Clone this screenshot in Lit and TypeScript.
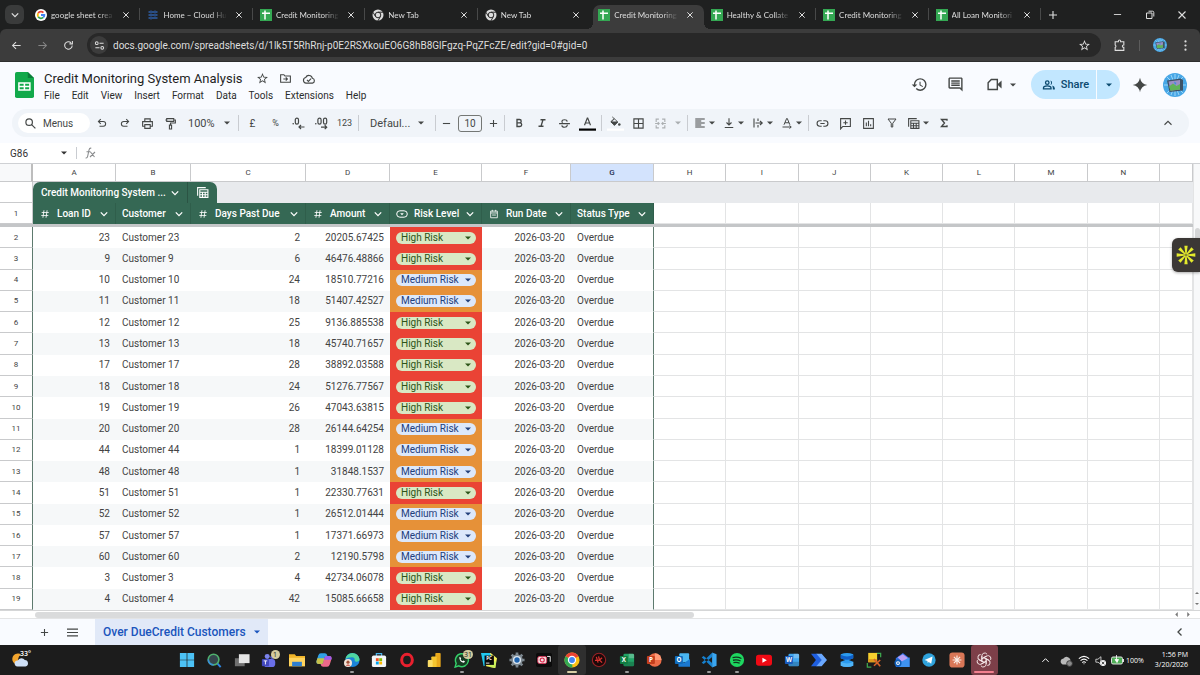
import { LitElement, html, css, svg } from "lit";
import { customElement } from "lit/decorators.js";
import { classMap } from "lit/directives/class-map.js";

/* ---------- shared ---------- */

const base = css`
  * { box-sizing: border-box; }
  button, input, select {
    margin: 0; padding: 0; border: 0; background: none; color: inherit;
    font: inherit; outline: 0; appearance: none; border-radius: 0;
  }
  button { display: flex; align-items: center; justify-content: center; flex: none; }
  a { color: inherit; text-decoration: none; }
  svg { display: block; flex: none; }
`;

const icon = (body: unknown, size = 12, box = 24) => html`<svg width=${size} height=${size}
  viewBox="0 0 ${box} ${box}" fill="currentColor" aria-hidden="true">${body}</svg>`;
const line = (d: string, width = 2) => svg`<path d=${d} fill="none" stroke="currentColor" stroke-width=${width}/>`;
const fill = (d: string) => svg`<path d=${d}/>`;
const caret = html`<svg width="6" height="4" viewBox="0 0 6 4" fill="currentColor" aria-hidden="true"><path d="M0 .5h6L3 3.5z"/></svg>`;
const chevron = html`<svg width="8" height="8" viewBox="0 0 8 8" fill="none" stroke="currentColor" stroke-width="1.3" aria-hidden="true"><path d="M.8 2.4 4 5.6l3.2-3.2"/></svg>`;

const STAR = fill("M22 9.24l-7.19-.62L12 2 9.19 8.63 2 9.24l5.46 4.73L5.82 21 12 17.27 18.18 21l-1.63-7.03L22 9.24zM12 15.4l-3.76 2.27 1-4.28-3.32-2.88 4.38-.38L12 6.1l1.71 4.04 4.38.38-3.32 2.88 1 4.28L12 15.4z");

const avatar = (size: number) => html`<svg width=${size} height=${size} viewBox="0 0 24 24" aria-hidden="true">
  <circle cx="12" cy="12" r="12" fill="#48a7e6"/>
  <path d="M12 1v22M1 12h22M4 4l16 16M20 4L4 20M8 2l8 20M16 2L8 22" stroke="#9cd6f7" stroke-width="1"/>
  <path d="M4 7.500 17.500 5.500 20 7v10.500L6.500 19z" fill="#3d5266"/>
  <path d="M5.500 8.600 17 7v9.500L7.500 17.700z" fill="#9a8fc4"/>
  <path d="M6 13.500 10 10.500l3.500 2.500L17 11v5.500L7.500 17.700z" fill="#5fb357"/>
  <path d="M11 8.500l2.500 1.500-1.500 2z" fill="#3c8be0"/>
</svg>`;

/* ---------- browser window ---------- */

const favicons: Record<string, unknown> = {
  google: html`<svg width="12" height="12" viewBox="0 0 24 24"><circle cx="12" cy="12" r="12" fill="#fff"/><g fill="none" stroke-width="3.600"><path d="M6.400 8.400A6.700 6.700 0 0 1 16.800 7.300" stroke="#ea4335"/><path d="M6.400 15.600a6.700 6.700 0 0 1 0-7.200" stroke="#fbbc05"/><path d="M16.600 16.900A6.700 6.700 0 0 1 6.400 15.600" stroke="#34a853"/><path d="M12 12h6.700a6.700 6.700 0 0 1-2.100 4.900" stroke="#4285f4"/></g></svg>`,
  cloud: html`<svg width="12" height="12" viewBox="0 0 12 12" fill="none" stroke="#2f5fa8" stroke-width="1.500"><path d="M1.500 3h9M1.500 6h9M1.500 9h9"/><path d="M4 1.500v3M8 4.500v3M4 7.500v3M8 1.500v2" stroke="#284b80" stroke-width="1.800"/></svg>`,
  sheets: html`<svg width="12" height="12" viewBox="0 0 12 12"><path d="M0 0h12v12H0z" fill="#34a853"/><path d="M2 4.200h8M5 1.500v9" stroke="#fff" stroke-width="1.500"/></svg>`,
  chrome: html`<svg width="12" height="12" viewBox="0 0 24 24"><circle cx="12" cy="12" r="11" fill="#dcdcdc"/><circle cx="12" cy="12" r="5.600" fill="#dcdcdc" stroke="#2a2a2a" stroke-width="2"/><path d="M12 6.400h10M7 15 2 6.500M16.800 15 12 23.500" stroke="#2a2a2a" stroke-width="2"/></svg>`,
};

const TABS = [
  { icon: "google", title: "google sheet crea" },
  { icon: "cloud", title: "Home – Cloud Hu" },
  { icon: "sheets", title: "Credit Monitoring" },
  { icon: "chrome", title: "New Tab" },
  { icon: "chrome", title: "New Tab" },
  { icon: "sheets", title: "Credit Monitoring", active: true },
  { icon: "sheets", title: "Healthy & Collate" },
  { icon: "sheets", title: "Credit Monitoring" },
  { icon: "sheets", title: "All Loan Monitori" },
];

@customElement("browser-bar")
class BrowserBar extends LitElement {
  static styles = [base, css`
    :host { display: block; background: #1f2020; color: #dedede; font-family: Lato, "Open Sans", sans-serif; }
    .strip { display: flex; height: 29px; padding-top: 5px; }
    .search { width: 19px; height: 19px; margin: 0 4px 0 5px; border-radius: 6px; background: #3a3b3b; }
    .tabs { flex: 1; display: flex; min-width: 0; }
    .tab { position: relative; flex: 1 1 0; min-width: 0; display: flex; align-items: center; padding: 0 10px 5px 7px; font-size: 8px; }
    .title { flex: 1; min-width: 0; margin: 0 8px 0 4px; white-space: nowrap; overflow: hidden; line-height: 16px;
      mask-image: linear-gradient(90deg, #000 75%, transparent); }
    .line { background: linear-gradient(#484949, #484949) right 3px / 1px 12px no-repeat; }
    .active { margin-left: 3px; padding-left: 5px; background: #3c3c3c; border-radius: 7px 7px 0 0; }
    .active::before, .active::after { content: ""; position: absolute; bottom: 0; width: 6px; height: 6px; }
    .active::before { left: -6px; background: radial-gradient(circle at 0 0, transparent 6px, #3c3c3c 6px); }
    .active::after { right: -6px; background: radial-gradient(circle at 100% 0, transparent 6px, #3c3c3c 6px); }
    .window { width: 159px; display: flex; align-items: center; justify-content: space-between; padding: 0 12px 5px 6px; }
    .window button { width: 12px; height: 12px; }
    .window button:first-child { margin-right: 32px; }
    .bar { display: flex; align-items: center; height: 33px; background: #3c3c3c; border-bottom: 1px solid #2e2e2e;
      border-radius: 6px 6px 0 0; padding: 0 10px 0 3px; }
    .nav { width: 26px; height: 24px; }
    .dim { color: #858585; }
    .omnibox { flex: 1; display: flex; align-items: center; height: 24px; margin: 0 12px 0 6px; padding: 0 10px 0 3px;
      border-radius: 12px; background: #282828; }
    .site { width: 18px; height: 18px; border-radius: 9px; background: #3c3c3c; margin-right: 5px; }
    .url { flex: 1; min-width: 0; height: 20px; font-family: Roboto, sans-serif; font-size: 10px; }
    .tools { display: flex; align-items: center; gap: 13px; }
    .rule { width: 1px; height: 11px; background: #5c5c5c; }
    .more { width: 10px; }
  `];
  render() {
    return html`
      <div class="strip">
        <button class="search" aria-label="Search tabs">${chevron}</button>
        <div class="tabs" role="tablist">
          ${TABS.map((t, i) => html`<div role="tab" aria-selected=${t.active ? "true" : "false"}
            class=${classMap({ tab: true, active: !!t.active, line: !t.active && !TABS[i + 1]?.active })}>
            ${favicons[t.icon]}<span class="title">${t.title}</span>
            <button aria-label="Close tab">${icon(line("M2 2l8 8M10 2l-8 8", 1.5), 8, 12)}</button>
          </div>`)}
        </div>
        <div class="window">
          <button aria-label="New tab">${icon(line("M5 0v10M0 5h10", 1.4), 8, 10)}</button>
          <button aria-label="Minimise">${icon(line("M1 5h8", 1), 9, 10)}</button>
          <button aria-label="Restore">${icon(line("M1.500 3h5.500v5.500H1.500zM3.500 1.200h4q1.300 0 1.300 1.300v4", 1), 10, 10)}</button>
          <button aria-label="Close">${icon(line("M1.500 1.500l7 7M8.500 1.500l-7 7", 1.1), 10, 10)}</button>
        </div>
      </div>
      <div class="bar">
        <button class="nav" aria-label="Back">${icon(line("M21 12H4M11 4.500 3.500 12l7.500 7.500", 2.3), 11)}</button>
        <button class="nav dim" aria-label="Forward">${icon(line("M3 12h17M13 4.500l7.500 7.500-7.500 7.500", 2.3), 11)}</button>
        <button class="nav" aria-label="Reload">${icon(line("M20 12a8.200 8.200 0 1 1-2.500-6M20.500 2v6.500H14", 2.3), 11)}</button>
        <div class="omnibox">
          <button class="site" aria-label="View site information">${icon(svg`<circle cx="6" cy="7" r="3" fill="none" stroke="currentColor" stroke-width="2.200"/><circle cx="18" cy="17" r="3" fill="none" stroke="currentColor" stroke-width="2.200"/><path d="M12 7h9M3 17h9" stroke="currentColor" stroke-width="2.200"/>`, 11)}</button>
          <input class="url" type="text" aria-label="Address bar" .value=${"docs.google.com/spreadsheets/d/1lk5T5RhRnj-p0E2RSXkouEO6G8hB8GlFgzq-PqZFcZE/edit?gid=0#gid=0"}>
          <button aria-label="Bookmark this tab">${icon(STAR, 13)}</button>
        </div>
        <div class="tools">
          <button aria-label="Extensions">${icon(line("M4 5h6V3.800a2 2 0 0 1 4 0V5h6v6h-.5a2.200 2.200 0 0 0 0 4.500h.5V21H4v-5.500a2.500 2.500 0 0 0 0-4.500z"), 13)}</button>
          <span class="rule"></span>
          <button aria-label="Profile">${avatar(14)}</button>
          <button class="more" aria-label="Menu">${icon(svg`<circle cx="6" cy="1.500" r="1.200"/><circle cx="6" cy="6" r="1.200"/><circle cx="6" cy="10.500" r="1.200"/>`, 11, 12)}</button>
        </div>
      </div>`;
  }
}

/* ---------- sheets header ---------- */

const MENUS = ["File", "Edit", "View", "Insert", "Format", "Data", "Tools", "Extensions", "Help"];

@customElement("sheets-header")
class SheetsHeader extends LitElement {
  static styles = [base, css`
    :host { display: block; background: #f9fbff; color: #444746; font-family: Roboto, sans-serif; }
    .top { display: flex; align-items: center; height: 45px; padding: 0 13px 0 15px; }
    .names { margin-left: 10px; padding-top: 4px; flex: 1; }
    .title { display: flex; align-items: center; gap: 10px; height: 17px; color: #1f1f1f; font-size: 13px; }
    .title h1 { margin: 0 3px 0 0; font-size: 13px; font-weight: 400; line-height: 17px; white-space: nowrap; }
    .title button { color: #444746; }
    .menus { display: flex; gap: 12px; height: 16px; font-size: 10px; color: #2b2c2c; }
    .actions { display: flex; align-items: center; }
    .meet { gap: 7px; margin: 0 15px 0 22px; }
    .hist { margin-right: 19px; }
    .share { display: flex; height: 29px; margin-right: 11px; border-radius: 15px; overflow: hidden; background: #c2e7ff; color: #0b4a6f; }
    .share button { height: 29px; }
    .share .main { gap: 5px; width: 66px; padding-left: 4px; font-size: 11px; font-weight: 500; border-right: 1px solid #f9fbff; }
    .drop { width: 23px; }
    .gem { width: 18px; margin-right: 14px; }
    .tools { display: flex; align-items: center; height: 28px; margin: 2px 11px 6px 12px; padding: 0 15px 0 6px;
      border-radius: 14px; background: #f0f4f9; font-size: 10px; }
    .find { display: flex; align-items: center; gap: 6px; width: 72px; height: 20px; padding-left: 6px; border-radius: 10px; background: #fff; }
    .find input { width: 40px; height: 18px; }
    .find input::placeholder { color: #444746; opacity: 1; }
    .t { width: 23px; height: 22px; }
    .slim { width: 17px; }
    .combo { width: 29px; gap: 3px; height: 22px; }
    .wide { width: 35px; gap: 8px; opacity: .4; }
    .sep { width: 1px; height: 16px; margin: 0 2px; background: #c9ccd1; }
    .pick { position: relative; display: flex; align-items: center; height: 22px; }
    .pick select { width: 100%; height: 22px; }
    .pick svg { margin-left: -12px; pointer-events: none; }
    .zoom { width: 54px; padding: 0 0 0 6px; font-size: 11px; }
    .font { width: 72px; padding: 0 3px 0 9px; font-size: 11px; }
    .size { width: 24px; height: 17px; margin: 0 3px; border: 1px solid #747775; border-radius: 3px; text-align: center; }
    .money { font-size: 10px; }
    .num { font-size: 9px; }
    .end { margin-left: auto; }
    .formula { display: flex; align-items: center; height: 21px; background: #fff; border-bottom: 1px solid #cfd1d4; padding-left: 10px; font-size: 10px; color: #333; }
    .cell { width: 51px; height: 18px; }
    .formula .bar { width: 1px; height: 12px; margin: 0 8px 0 9px; background: #c9ccd1; }
    .fx { color: #8a8c8e; }
    .entry { flex: 1; height: 18px; }
  `];
  render() {
    return html`
      <div class="top">
        <svg width="19" height="26" viewBox="0 0 19 26" aria-hidden="true">
          <path d="M1.800 0h11L19 6v18.200q0 1.800-1.800 1.800H1.800Q0 26 0 24.200V1.800Q0 0 1.800 0z" fill="#12a94b"/><path d="M12.800 0 19 6h-6.200z" fill="#0b7d3a"/>
          <path d="M3.900 10.900h11v7.200h-11zM3.900 14.500h11M9.400 10.900v7.200" fill="none" stroke="#fff" stroke-width="1.500"/></svg>
        <div class="names">
          <div class="title"><h1>Credit Monitoring System Analysis</h1>
            <button aria-label="Star">${icon(STAR, 13)}</button>
            <button aria-label="Move">${icon(line("M3 5h6l2 2.500h10V19H3zM8 13h7M12.500 10l3 3-3 3"), 13)}</button>
            <button aria-label="Saved to Drive">${icon(line("M7 19a4.800 4.800 0 0 1-.6-9.500 6 6 0 0 1 11.400 1.300A4.200 4.200 0 0 1 18 19zM8.500 13.500l2.500 2.500 4.500-4.500"), 14)}</button>
          </div>
          <nav class="menus">${MENUS.map((m) => html`<button>${m}</button>`)}</nav>
        </div>
        <div class="actions">
          <button class="hist" aria-label="Version history">${icon(fill("M13 3a9 9 0 0 0-9 9H1l3.890 3.890.070.140L9 12H6c0-3.870 3.130-7 7-7s7 3.130 7 7-3.130 7-7 7c-1.930 0-3.680-.790-4.940-2.060l-1.420 1.420A8.954 8.954 0 0 0 13 21a9 9 0 0 0 0-18zm-1 5v5l4.280 2.540.720-1.210-3.500-2.080V8H12z"), 17)}</button>
          <button aria-label="Comments">${icon(fill("M21.990 4c0-1.100-.890-2-1.990-2H4c-1.100 0-2 .9-2 2v12c0 1.100.9 2 2 2h14l4 4-.010-18zM20 4v13.170L18.830 16H4V4h16zM6 12h12v2H6zm0-3h12v2H6zm0-3h12v2H6z"), 17)}</button>
          <button class="meet" aria-label="Join a call">${icon(svg`<path d="M3 9.500 7.500 5H16v14H3z" fill="none" stroke="currentColor" stroke-width="2"/><path d="M17 11l5-4.500v11L17 13z"/>`, 17)}${caret}</button>
          <div class="share">
            <button class="main">${icon(svg`<circle cx="9" cy="8" r="3" fill="none" stroke="currentColor" stroke-width="2.200"/><path d="M2.500 18.500v-1.200c0-2.300 3.300-3.800 6.500-3.800s6.500 1.500 6.500 3.800v1.200z" fill="none" stroke="currentColor" stroke-width="2.200"/><path d="M14.500 4.200a4 4 0 0 1 0 7.600q2-3.800 0-7.600zM17 13q5 1.300 5 4.500v2h-3.500v-2.500q0-2.300-1.500-4z"/>`, 14)}Share</button>
            <button class="drop" aria-label="Share options">${caret}</button>
          </div>
          <button class="gem" aria-label="Ask Gemini">${icon(fill("M12 1q1.600 9.400 11 11-9.400 1.600-11 11-1.600-9.400-11-11Q10.400 10.400 12 1z"), 16)}</button>
          <button aria-label="Account">${avatar(24)}</button>
        </div>
      </div>
      <div class="tools" role="toolbar">
        <label class="find">${icon(svg`<circle cx="9.500" cy="9.500" r="6" fill="none" stroke="currentColor" stroke-width="2.200"/><path d="M14 14l7 7" stroke="currentColor" stroke-width="2.200"/>`, 13)}<input type="text" placeholder="Menus" aria-label="Search the menus"></label>
        <button class="t" aria-label="Undo">${icon(line("M7 18.500h7.500a4.800 4.800 0 0 0 0-9.600H5M9.500 4.200 4.800 8.900l4.700 4.700", 2.100))}</button>
        <button class="t" aria-label="Redo">${icon(line("M17 18.500H9.500a4.800 4.800 0 0 1 0-9.600H19M14.500 4.200l4.700 4.700-4.700 4.700", 2.100))}</button>
        <button class="t" aria-label="Print">${icon(line("M7 8V3.500h10V8M7 17H3V8.500h18V17h-4M7 14h10v7H7z"), 13)}</button>
        <button class="t" aria-label="Paint format">${icon(line("M5 3h13v5H5zM18 5.500h3V11h-9v4M10 15h4v7h-4zM5 5.500H2.500"), 13)}</button>
        <label class="pick zoom"><select aria-label="Zoom"><option>100%</option></select>${caret}</label>
        <span class="sep"></span>
        <button class="t money">£</button>
        <button class="t num">%</button>
        <button class="t" aria-label="Decrease decimal places"><svg width="13" height="13" viewBox="0 0 13 13"><circle cx="1.200" cy="6.800" r=".8" fill="currentColor"/><rect x="3.300" y="1.200" width="3.200" height="6" rx="1.600" fill="none" stroke="currentColor" stroke-width="1.200"/><path d="M12.500 10H7.200M9 8l-2 2 2 2" fill="none" stroke="currentColor" stroke-width="1.200"/></svg></button>
        <button class="t" aria-label="Increase decimal places"><svg width="13" height="13" viewBox="0 0 13 13"><circle cx=".8" cy="6.800" r=".8" fill="currentColor"/><rect x="2.900" y="1.200" width="3.200" height="6" rx="1.600" fill="none" stroke="currentColor" stroke-width="1.200"/><rect x="8.500" y="1.200" width="3.200" height="6" rx="1.600" fill="none" stroke="currentColor" stroke-width="1.200"/><path d="M6 10.200h5.500M9.700 8.300l2 1.900-2 2" fill="none" stroke="currentColor" stroke-width="1.200"/></svg></button>
        <button class="t num">123</button>
        <span class="sep"></span>
        <label class="pick font"><select aria-label="Font"><option>Defaul...</option></select>${caret}</label>
        <span class="sep"></span>
        <button class="t slim" aria-label="Decrease font size">${icon(line("M1 5h8", 1.2), 9, 10)}</button>
        <input class="size" type="text" aria-label="Font size" value="10">
        <button class="t slim" aria-label="Increase font size">${icon(line("M1 5h8M5 1v8", 1.2), 9, 10)}</button>
        <span class="sep"></span>
        <button class="t" aria-label="Bold">${icon(line("M8 5h5a3.300 3.300 0 0 1 0 6.800H8zM8 11.800h5.800a3.500 3.500 0 0 1 0 7.200H8z", 2.700))}</button>
        <button class="t" aria-label="Italic">${icon(line("M9 5.500h10M5 18.500h10M14 5.500l-4 13", 2.600))}</button>
        <button class="t" aria-label="Strikethrough">${icon(line("M2 12.200h20M17 8.500Q16.500 5 12 5T7.300 8.300q0 1.500 1.200 2.200M7 15.500Q7.500 19 12 19t5-3q0-1-.5-1.800", 2.100), 13)}</button>
        <button class="t" aria-label="Text colour"><svg width="17" height="15" viewBox="0 0 17 15"><path d="M5.500 9.200 8.300 2h.4l2.800 7.200M6.500 7h4" fill="none" stroke="currentColor" stroke-width="1.200"/><path d="M0 12.500h17v2.200H0z" fill="#000"/></svg></button>
        <span class="sep"></span>
        <button class="t" aria-label="Fill colour"><svg width="17" height="15" viewBox="0 0 17 15"><path d="M5.200.8 10.800 6 7.500 9.300 3.800 5.700l3.500-3.200M4 6h6.500L7.500 9.200z" fill="currentColor" stroke="currentColor" stroke-width=".8"/><path d="M5 5.500l2.500-2.200L9.800 5.500z" fill="#f0f4f9"/><circle cx="12.300" cy="8.500" r="1.300" fill="currentColor"/><path d="M0 12.500h17v2.200H0z" fill="#fff"/></svg></button>
        <button class="t" aria-label="Borders">${icon(line("M3.500 3.500h17v17h-17zM12 3.500v17M3.500 12h17", 2.100), 13)}</button>
        <button class="combo wide" aria-label="Merge cells">${icon(line("M9 4H4v5M4 15v5h5M15 4h5v5M20 15v5h-5M2 12h7M15 12h7M7 9.500l2.500 2.500L7 14.500M17 9.500 14.500 12l2.500 2.500", 2.100), 13)}${caret}</button>
        <span class="sep"></span>
        <button class="combo" aria-label="Horizontal align">${icon(line("M2.500 4h19M2.500 8h12M2.500 12h19M2.500 16h12M2.500 20h19"), 12)}${caret}</button>
        <button class="combo" aria-label="Vertical align">${icon(line("M3.500 21h17M12 2.500v13M7 11l5 5 5-5", 2.200), 12)}${caret}</button>
        <button class="combo" aria-label="Text wrapping">${icon(line("M4 3v18M12 3v5M12 16v5M7 12h13M16 8l4.500 4-4.500 4", 2.200), 12)}${caret}</button>
        <button class="combo" aria-label="Text rotation">${icon(line("M6 15.500 11.300 3h1.200L17.800 15.500M8 11.500h8M3 20h17M17 17l3.500 3-3.500 3", 2), 12)}${caret}</button>
        <span class="sep"></span>
        <button class="t" aria-label="Insert link">${icon(line("M10.500 17H7A5 5 0 0 1 7 7h3.500M13.500 7H17a5 5 0 0 1 0 10h-3.500M8 12h8"), 13)}</button>
        <button class="t" aria-label="Insert comment">${icon(line("M3 22V3h18v14.500H7zM12 6.500v8M8 10.500h8"), 13)}</button>
        <button class="t" aria-label="Insert chart">${icon(line("M3 3h18v18H3zM8 10v7M12 7v10M16 13.500V17"), 13)}</button>
        <button class="t" aria-label="Create a filter">${icon(line("M4 4h16l-6.500 8.500V20h-3v-7.500z"), 12)}</button>
        <button class="combo" aria-label="Table views">${icon(line("M7 7h15v14H7zM7 11.500h15M7 16.300h15M12 11.500V21M17 11.500V21M3 18V3h15"), 13)}${caret}</button>
        <button class="t" aria-label="Functions">${icon(line("M18 7.500V5H7l6 7-6 7h11v-2.500", 2.700), 12)}</button>
        <button class="end" aria-label="Hide the menus">${icon(line("M5 15.500 12 8.500l7 7", 2.200), 12)}</button>
      </div>
      <div class="formula">
        <input class="cell" type="text" aria-label="Name box" value="G86">${caret}
        <span class="bar"></span>
        <svg class="fx" width="11" height="12" viewBox="0 0 11 12" fill="none" stroke="currentColor" stroke-width="1.100" aria-hidden="true"><path d="M6.300 1.200Q4.500.8 4 3L2.600 9.500Q2.200 11.300.6 11M1.500 4.800h4M5.500 5l4 5M10 5l-5 5"/></svg>
        <input class="entry" type="text" aria-label="Formula">
      </div>`;
  }
}

/* ---------- grid ---------- */

type Loan = [id: number, days: number, amount: string, high: boolean];
const LOANS: Loan[] = [
  [23, 2, "20205.67425", true], [9, 6, "46476.48866", true], [10, 24, "18510.77216", false],
  [11, 18, "51407.42527", false], [12, 25, "9136.885538", true], [13, 18, "45740.71657", true],
  [17, 28, "38892.03588", true], [18, 24, "51276.77567", true], [19, 26, "47043.63815", true],
  [20, 28, "26144.64254", false], [44, 1, "18399.01128", false], [48, 1, "31848.1537", false],
  [51, 1, "22330.77631", true], [52, 1, "26512.01444", false], [57, 1, "17371.66973", false],
  [60, 2, "12190.5798", false], [3, 4, "42734.06078", true], [4, 42, "15085.66658", true],
];
const hash = icon(line("M9.500 3 7 21M17 3l-2.500 18M4 8.500h17M3 15.500h17", 2), 10);
const FIELDS: [string, unknown][] = [
  ["Loan ID", hash], ["Customer", null], ["Days Past Due", hash], ["Amount", hash],
  ["Risk Level", html`<svg width="12" height="10" viewBox="0 0 12 10"><rect x=".7" y="1.800" width="10.600" height="6.400" rx="3.200" fill="none" stroke="currentColor" stroke-width="1"/><path d="M4.200 4.200h3.600L6 6.200z" fill="currentColor"/></svg>`],
  ["Run Date", icon(line("M4 5h16v16H4zM4 9.500h16M8 2v4M16 2v4M7.500 14.500h9"), 10)],
  ["Status Type", null],
];
const LETTERS = [..."ABCDEFGHIJKLMN"];
const BLANKS = [0, 1, 2, 3, 4, 5, 6, 7];

@customElement("sheet-grid")
class SheetGrid extends LitElement {
  static styles = [base, css`
    :host { position: relative; flex: 1; display: flex; flex-direction: column; background: #fff; color: #434343; font-family: Roboto, sans-serif; font-size: 10px; }
    .area { flex: 1; display: flex; }
    table { flex: 1; display: flex; flex-direction: column; min-width: 0; }
    thead { display: block; }
    tbody { flex: 1; display: grid; grid-auto-rows: minmax(21px, 1fr); border-top: 3px solid #c4c6c8; }
    tr { display: grid; grid-template-columns: 33px 83px 75px 115px 84px 92px 89px 83px repeat(7, minmax(0, 1fr)) 33px; }
    th, td { display: flex; align-items: center; min-width: 0; padding: 0; font-weight: 400; border-right: 1px solid #e3e4e5; border-bottom: 1px solid #e3e4e5; }
    .letters { height: 18px; font-size: 8px; }
    .letters th { justify-content: center; border-color: #c9cacc; }
    .letters .corner { background: #f8f9fa; border-right: 2px solid #bdbdbd; }
    .letters .on { background: #d3e3fd; color: #1f2f55; font-weight: 500; }
    .rowno { justify-content: center; font-size: 8px; border-right-color: #c9cacc; border-bottom-color: #c9cacc; }
    .strip { height: 21px; }
    .strip td { grid-column: 2 / -1; align-items: stretch; background: #e8eaed; border: 0; }
    .name { display: flex; border-radius: 7px 7px 0 0; background: #356854; color: #fff; font-size: 10px; font-weight: 500; }
    .name button:first-child { justify-content: space-between; width: 155px; padding: 0 8px; border-right: 1px solid #2b5444; }
    .name button:last-child { width: 29px; }
    .fields { height: 21px; }
    .fields .field { padding: 0 6px 0 6px; background: #356854; color: #fff; font-weight: 500; border-color: #2f5e4b; border-bottom: 0; white-space: nowrap; }
    .field button { margin-left: auto; width: 10px; height: 12px; }
    .kind { width: 12px; margin-right: 6px; display: flex; justify-content: center; }
    .loan td { border-bottom-color: transparent; border-right-color: transparent; }
    .loan .blank { border-color: #e3e4e5; }
    .loan .rowno { border-right: 1px solid #5d7a6e; border-bottom-color: #c9cacc; }
    .loan:nth-child(even) .cell { background: #f6f8f9; }
    .num { justify-content: flex-end; padding-right: 5px; }
    .text { padding-left: 6px; }
    .loan .status { border-right-color: #5d7a6e; }
    .loan .risk { justify-content: center; border: 0; }
    .loan .risk.high { background: #ea4335; }
    .loan .risk.medium { background: #e69138; }
    .chip { display: flex; align-items: center; width: 80px; height: 12px; padding-right: 5px; border-radius: 6px; }
    .chip select { flex: 1; min-width: 0; height: 12px; padding-left: 5px; line-height: 12px; }
    .chip svg { margin-left: -8px; pointer-events: none; }
    .high .chip { background: #d9e8c4; color: #2c5418; }
    .medium .chip { background: #dce8fb; color: #23407c; }
    .high option, .medium option { color: #222; }
    .vscroll { width: 7px; display: flex; flex-direction: column; justify-content: space-between; background: #f8f9fa; border-left: 1px solid #e3e4e5; }
    .thumb { height: 12px; margin: 64px 0 0 1px; border-radius: 4px 4px 0 0; background: #d5d6d7; }
    .arrows { display: flex; color: #777; gap: 7px; }
    .vscroll .arrows { flex-direction: column; padding-bottom: 4px; align-items: center; }
    .hscroll { display: flex; align-items: center; justify-content: space-between; height: 9px; padding: 0 9px 0 35px; border-top: 1px solid #d5d6d7; border-bottom: 1px solid #e3e4e5; }
    .track { width: 57%; height: 6px; border-radius: 3px; background: #dadbdc; }
    .helper { position: absolute; right: 0; top: 74px; width: 28px; height: 34px; border-radius: 6px 0 0 6px; background: #3b3735; color: #e4ea2c; box-shadow: 0 1px 3px #0005; }
  `];
  render() {
    return html`
      <div class="area">
        <table>
          <thead>
            <tr class="letters"><th class="corner"></th>${LETTERS.map((l) => html`<th class=${l === "G" ? "on" : ""}>${l}</th>`)}<th></th></tr>
            <tr class="strip"><th class="rowno"></th><td><div class="name">
              <button>Credit Monitoring System ...${chevron}</button>
              <button aria-label="Table views">${icon(line("M7 7h15v14H7zM7 11.500h15M7 16.300h15M12 11.500V21M17 11.500V21M3 18V3h15"), 13)}</button></div></td></tr>
            <tr class="fields"><th class="rowno">1</th>
              ${FIELDS.map(([label, kind]) => html`<th class="field">${kind ? html`<span class="kind">${kind}</span>` : ""}${label}<button aria-label="${label} options">${chevron}</button></th>`)}
              ${BLANKS.map(() => html`<td></td>`)}</tr>
          </thead>
          <tbody>
            ${LOANS.map(([id, days, amount, high], i) => html`<tr class="loan">
              <th class="rowno">${i + 2}</th>
              <td class="cell num">${id}</td>
              <td class="cell text">Customer ${id}</td>
              <td class="cell num">${days}</td>
              <td class="cell num">${amount}</td>
              <td class="risk ${high ? "high" : "medium"}"><label class="chip"><select aria-label="Risk level of customer ${id}">
                <option ?selected=${high}>High Risk</option><option ?selected=${!high}>Medium Risk</option></select>${caret}</label></td>
              <td class="cell num">2026-03-20</td>
              <td class="cell text status">Overdue</td>
              ${BLANKS.map(() => html`<td class="blank"></td>`)}
            </tr>`)}
          </tbody>
        </table>
        <div class="vscroll"><div class="thumb"></div>
          <div class="arrows">${icon(fill("M0 3h4L2 1z"), 4, 4)}${icon(fill("M0 1h4L2 3z"), 4, 4)}</div></div>
      </div>
      <div class="hscroll"><div class="track"></div>
        <div class="arrows">${icon(fill("M3 0v4L1 2z"), 5, 4)}${icon(fill("M1 0v4l2-2z"), 5, 4)}</div></div>
      <button class="helper" aria-label="Assistant">${icon(svg`${[0, 45, 90, 135, 180, 225, 270, 315].map((a) => svg`<path transform="rotate(${a} 12 12)" d="M11.300 11 10 .8h4L12.700 11z"/>`)}`, 20)}</button>`;
  }
}

/* ---------- sheet tabs ---------- */

@customElement("sheet-tabs")
class SheetTabs extends LitElement {
  static styles = [base, css`
    :host { display: flex; align-items: center; height: 26px; padding: 0 15px 0 30px; background: #f9fbff; color: #444746; font-family: Roboto, sans-serif; }
    .t { width: 28px; height: 24px; }
    .tab { align-self: stretch; gap: 8px; margin-left: 9px; padding: 0 8px; background: #e1e9f8; color: #1a55bd; font-size: 12px; font-weight: 500; }
    .end { margin-left: auto; }
  `];
  render() {
    return html`
      <button class="t" aria-label="Add sheet">${icon(line("M5 1v8M1 5h8", 1.2), 9, 10)}</button>
      <button class="t" aria-label="All sheets">${icon(line("M0 2h10M0 5h10M0 8h10", 1.1), 11, 10)}</button>
      <button class="tab">Over DueCredit Customers${caret}</button>
      <button class="end" aria-label="Show side panel">${icon(line("M6.500 1.500 3 5l3.500 3.500", 1.3), 10, 10)}</button>`;
  }
}

/* ---------- taskbar ---------- */

const office = (a: string, b: string, letter: string) => svg`<rect x="5" y="2" width="12" height="14" rx="1.500" fill=${a}/><path d="M11 2h4.500q1.500 0 1.500 1.500V7h-6z" fill="#fff" opacity=".25"/><path d="M5 11h12v3.500q0 1.500-1.500 1.500H5z" fill="#000" opacity=".2"/><rect x="1" y="4.500" width="9" height="9" rx="1" fill=${b}/><text x="5.500" y="11.500" font-size="7" font-weight="700" text-anchor="middle" fill="#fff">${letter}</text>`;

const APPS: { name: string; art: unknown; run?: boolean; state?: string; badge?: string }[] = [
  { name: "Start", art: svg`<path d="M1 1h7.600v7.600H1zM9.400 1H17v7.600H9.400zM1 9.400h7.600V17H1zM9.400 9.400H17V17H9.400z" fill="#4cc2f5"/>` },
  { name: "Search", art: svg`<circle cx="8.500" cy="8.500" r="6" fill="#35454c" stroke="#4fb06d" stroke-width="1.800"/><path d="M2.500 8.500a6 6 0 0 0 6 6" fill="none" stroke="#3a8fd8" stroke-width="1.800"/><path d="M13 13l3.500 4" stroke="#2f86e0" stroke-width="2.200"/>` },
  { name: "Task view", art: svg`<rect x="1" y="7" width="11" height="9" fill="#707070"/><rect x="5.500" y="2.500" width="12" height="10" fill="#e6e6e6"/>` },
  { name: "Teams", badge: "1", art: svg`<circle cx="7" cy="5" r="2.800" fill="#7b83eb"/><circle cx="12.500" cy="6" r="2" fill="#5059c9"/><rect x="3" y="8" width="13" height="9" rx="3.500" fill="#6a6fe8"/><rect x="1" y="8" width="8" height="8" rx="1" fill="#4248bd"/><path d="M3 10h4M5 10v4" stroke="#fff"/>` },
  { name: "Files", art: svg`<path d="M0 2.500h6.500l1.500 2h10V16H0z" fill="#f0b429"/><path d="M0 6.500h18V16H0z" fill="#ffd45e"/><path d="M3.500 11h11v5h-11z" fill="#2f7fd0"/>` },
  { name: "Copilot", art: svg`<path d="M5.500 1.500h4.500q2 0 2.500 2l.6 2.200H10L8.300 11.700Q7.800 13.500 6 13.500H3Q-.2 13.500.6 10L2.500 4Q3.300 1.500 5.500 1.500z" fill="#2f9fe6"/><path d="M.6 10 1.600 7H9.600l-1.300 4.700Q7.800 13.500 6 13.500H3Q-.2 13.500.6 10z" fill="#c7c14a"/><path d="M12.500 16.500H8q-2 0-2.500-2l-.3-1h2.300L9.700 6.300Q10.200 4.500 12 4.500h3Q18.200 4.500 17.400 8l-1.900 6q-.8 2.500-3 2.500z" fill="#ee6a8a"/><path d="M9 8.800l.7-2.500Q10.200 4.500 12 4.500h3Q18.200 4.500 17.400 8l-.3.800z" fill="#9a5cf0"/>` },
  { name: "Edge", run: true, art: svg`<circle cx="9.500" cy="9" r="8" fill="#1b84d8"/><path d="M1.500 8a8.100 8.100 0 0 1 16 0q0 3-3.500 3-2.500 0-2-2 .4-3-3-3Q4 6 1.500 8z" fill="#4fd6a0"/><circle cx="4.500" cy="12.500" r="4.500" fill="#f2e4d8"/><circle cx="4.500" cy="11.500" r="1.800" fill="#a2543a"/><path d="M2 15.500q2.500-3 5 0z" fill="#c23b32"/>` },
  { name: "Store", art: svg`<path d="M6 4.500V1.800h6v2.700" fill="none" stroke="#49b3ec" stroke-width="1.300"/><rect x="1" y="4" width="16" height="13" rx="1.800" fill="#f2f5f7"/><path d="M5.500 7h3.200v3.200H5.500z" fill="#f25022"/><path d="M9.300 7h3.200v3.200H9.300z" fill="#7fba00"/><path d="M5.500 10.800h3.200V14H5.500z" fill="#00a4ef"/><path d="M9.300 10.800h3.200V14H9.300z" fill="#ffb900"/>` },
  { name: "Opera", art: svg`<ellipse cx="9" cy="9" rx="6" ry="6.500" fill="none" stroke="#e8202e" stroke-width="3.400"/>` },
  { name: "Power BI", art: svg`<rect x="10.500" y="1" width="6" height="16" rx="1" fill="#e8a71a"/><rect x="6" y="5" width="6" height="12" rx="1" fill="#f5c630"/><rect x="2" y="9" width="5.500" height="8" rx="1" fill="#fbdd66"/>` },
  { name: "WhatsApp", badge: "31", run: true, art: svg`<path d="M1.200 17l1.300-4.300a7.300 7.300 0 1 1 2.900 2.900z" fill="#173b22" stroke="#35d06a" stroke-width="1.600"/><path d="M6 6q.8-1 1.500.2l.5 1.300-.6.8q.8 1.400 2.300 2.100l.8-.8 1.800.9q-.2 1.600-1.800 1.500Q6 11.500 6 6z" fill="#fff"/>` },
  { name: "PyCharm", art: svg`<path d="M1 1h10l7 6-2 11-10-2z" fill="#f5f05a"/><path d="M0 1h10l3 7-10 8z" fill="#21c8f0"/><path d="M10 12l7-2-1 8-6-1z" fill="#c9f05a"/><rect x="4" y="4" width="10.500" height="10.500" fill="#0a0a0a"/><text x="9" y="9.500" font-size="5" font-weight="700" text-anchor="middle" fill="#fff">PC</text><path d="M5.500 12.500h4" stroke="#fff"/>` },
  { name: "Settings", art: svg`<circle cx="9" cy="9" r="6.500" fill="#7d8890"/><path d="M9 .5v17M.5 9h17M3 3l12 12M15 3 3 15" stroke="#7d8890" stroke-width="3"/><circle cx="9" cy="9" r="3.800" fill="#1f63ad" stroke="#dfe8ef" stroke-width="1.600"/>` },
  { name: "Recorder", art: svg`<rect x="0" y="1" width="18" height="16" rx="2" fill="#0b0b0b"/><rect x="2" y="5" width="10" height="8" rx="2" fill="#f2dede" stroke="#e0355a"/><circle cx="7" cy="9" r="2.300" fill="none" stroke="#d81f45" stroke-width="1.200"/><path d="M12.500 5H16v6" fill="none" stroke="#fff"/>` },
  { name: "Chrome", run: true, state: "open", art: svg`<circle cx="9" cy="9" r="8.500" fill="#fbc116"/><path d="M9 9 1.700 4.700A8.500 8.500 0 0 1 16.300 4.700z" fill="#ea4335"/><path d="M9 9 9.500 17.500A8.500 8.500 0 0 1 1.700 4.700z" fill="#34a853"/><circle cx="9" cy="9" r="4" fill="#4285f4" stroke="#fff" stroke-width="1.400"/>` },
  { name: "Media", art: svg`<circle cx="9" cy="9" r="7.500" fill="#1b0909" stroke="#9c2226" stroke-width="1.200"/><path d="M6 5.500l2 6.500M8.500 5l1 4M12.500 6.500 9.500 9l3 3M4.500 9.500h5.500" stroke="#d8322f" stroke-width="1.400" fill="none"/>` },
  { name: "Excel", run: true, art: office("#21a366", "#107c41", "X") },
  { name: "PowerPoint", art: svg`<circle cx="10" cy="9" r="7.500" fill="#ed6c47"/><path d="M10 1.500a7.500 7.500 0 0 1 7.500 7.500H10z" fill="#ff9a76"/><rect x="1" y="4.500" width="9" height="9" rx="1" fill="#c43e1c"/><text x="5.500" y="11.500" font-size="7" font-weight="700" text-anchor="middle" fill="#fff">P</text>` },
  { name: "Outlook", art: svg`<rect x="6" y="1.500" width="11" height="10" rx="1" fill="#49b5f0"/><path d="M5 8l6.500 4L18 8v8.500H5z" fill="#1a78d0"/><rect x="1" y="4.500" width="9" height="9" rx="1" fill="#0f6cbd"/><text x="5.500" y="11.500" font-size="7" font-weight="700" text-anchor="middle" fill="#fff">O</text>` },
  { name: "VS Code", run: true, art: svg`<path d="M12.500.5 17.500 2.500v13l-5 2z" fill="#3aa6f0"/><path d="M12.500.8v4.700L3 13.500.8 12zM12.500 17.200v-4.700L3 4.500.8 6z" fill="#1681d0"/>` },
  { name: "Spotify", run: true, art: svg`<circle cx="9" cy="9" r="8" fill="#1ed760"/><path d="M4 6.300q5.500-1.400 10 1M4.500 9.300q4.500-1.200 8.500.8M5 12q4-1 7 .7" fill="none" stroke="#10331d" stroke-width="1.500"/>` },
  { name: "YouTube", art: svg`<rect x="0" y="3" width="18" height="12.500" rx="3" fill="#f00a14"/><path d="M7.200 6.500v5.500l5-2.700z" fill="#fff"/>` },
  { name: "Word", art: office("#41a5ee", "#185abd", "W") },
  { name: "Power Automate", art: svg`<path d="M0 2h7l5.500 7L7 16H0l5.500-7z" fill="#1f5fe0"/><path d="M6 2h6l6 7-6 7H6l6-7z" fill="#6aa8ff"/>` },
  { name: "Dataverse", art: svg`<path d="M2 2.500q7-3 14 0V7l-5 2 5 2v4.500q-7 3-14 0V11l5-2-5-2z" fill="#2b9bf0"/><path d="M2 3q7 4 14 0v4q-7 3.500-14 0z" fill="#0f5fc8"/><path d="M2 11q7 4 14 0v4.500q-7 3-14 0z" fill="#4fb4f7"/>` },
  { name: "Snipping", art: svg`<path d="M1.500 12.500v4.500H6M12 1.500h4.500V6" fill="none" stroke="#3ea84f" stroke-width="1.400"/><path d="M2.500 1h10v10.500h-10z" fill="#f7cf2e"/><path d="M2.500 8h10v3.500h-10z" fill="#dd9a1c"/><path d="M9 8l7 8M16 9l-7 6.500" stroke="#d8642a" stroke-width="1.800"/>` },
  { name: "Mail", art: svg`<path d="M2 7l8-6 7.500 6v10H2z" fill="#2f6fe0"/><path d="M4 6l6-3.500L16 7l-6 5z" fill="#b9a0f5"/><path d="M6 12l11.500-6v11H6z" fill="#3f93f0"/><circle cx="4.500" cy="12.500" r="4" fill="#0f5fb8"/><circle cx="4.500" cy="12.500" r="1.600" fill="none" stroke="#fff" stroke-width="1.200"/>` },
  { name: "Telegram", art: svg`<circle cx="9" cy="9" r="7.500" fill="#2fa3dc"/><path d="M4 9l9-3.800-1.500 8-2.800-2-1.200 1.300-.3-2.500z" fill="#fff"/>` },
  { name: "Claude", art: svg`<rect x=".5" y=".5" width="17" height="17" rx="3.500" fill="#d97757"/><path d="M9 4v10M4 9h10M5.500 5.500l7 7M12.500 5.500l-7 7" stroke="#fbeee8" stroke-width="1.300"/>` },
  { name: "ChatGPT", state: "hot", art: svg`<g fill="none" stroke="#f5e9ea" stroke-width="1.050">${[0, 60, 120, 180, 240, 300].map((a) => svg`<path transform="rotate(${a} 9 9)" d="M6.600 10.400V4.300A3.200 3.200 0 0 1 12.500 2.600M6.600 7.600l5.200-3"/>`)}</g>` },
];

@customElement("task-bar")
class TaskBar extends LitElement {
  static styles = [base, css`
    :host { display: flex; height: 30px; background: #1c1c1c; color: #fff; font-family: "Open Sans", "Noto Sans", sans-serif; font-size: 7px; }
    .weather { flex: 1; display: flex; align-items: center; padding-left: 12px; }
    .weather span { align-self: flex-start; margin-left: -10px; line-height: 18px; font-weight: 600; }
    .apps { flex: 0 1 825px; display: flex; }
    .app { position: relative; flex: 1 1 0; height: 30px; }
    .open { background: #2f2f2f; border-radius: 3px; }
    .hot { background: #7d3f49; border-radius: 3px; }
    .run::after, .hot::after { content: ""; position: absolute; bottom: 2px; left: 50%; width: 4px; height: 2px; margin-left: -2px; border-radius: 1px; background: #9a9a9a; }
    .open::after { width: 10px; margin-left: -5px; background: #d8cfa6; }
    .hot::after { width: 20px; margin-left: -10px; background: #f2808f; }
    .badge { position: absolute; top: 5px; left: 15px; min-width: 9px; height: 9px; padding: 0 1px; border-radius: 5px; background: #d3cc9e; color: #222; font-size: 7px; line-height: 9px; text-align: center; }
    .tray { flex: 0 0 202px; display: flex; align-items: center; justify-content: flex-end; gap: 5px; padding-right: 12px; }
    .clock { margin-left: 6px; text-align: right; line-height: 10px; }
    .power { display: flex; align-items: center; gap: 2px; font-size: 7px; }
    .up { margin-right: 5px; }
  `];
  render() {
    return html`
      <div class="weather"><svg width="18" height="18" viewBox="0 0 18 18"><path d="M9 3.500A5.500 5.500 0 1 0 8 13a6 6 0 0 1 1-9.500z" fill="#f2a52e"/><path d="M5.500 15.500a3 3 0 0 1 .3-6 4 4 0 0 1 7-.5 3.300 3.300 0 0 1 .7 6.500z" fill="#cfe0f7"/></svg><span>33°</span></div>
      <div class="apps">${APPS.map((a) => html`<button class="app ${a.state ?? ""} ${a.run ? "run" : ""}" aria-label=${a.name}>
        <svg width="16" height="16" viewBox="0 0 18 18" aria-hidden="true">${a.art}</svg>${a.badge ? html`<span class="badge">${a.badge}</span>` : ""}</button>`)}</div>
      <div class="tray">
        <button class="up" aria-label="Hidden icons">${icon(line("M1.500 6.500 5 3l3.500 3.500", 1.1), 9, 10)}</button>
        ${icon(svg`<path d="M3 12a3.500 3.500 0 0 1 1-6.800 4.500 4.500 0 0 1 8 1.500V12z" fill="#b9b9b9"/><circle cx="11" cy="11" r="3.300" fill="#8a8a8a" stroke="#333"/>`, 13, 15)}
        ${icon(line("M1 5.500q6-5.500 12 0M3 7.800q4-3.600 8 0M5 10q2-1.800 4 0M6.500 11.500h1", 1.2), 12, 14)}
        ${icon(svg`<path d="M1 5h2.500L7 2v9L3.500 8.500H1z" fill="none" stroke="#ddd"/><circle cx="9.500" cy="9.500" r="3.600" fill="#eee"/><path d="M8 8l3 3M11 8l-3 3" stroke="#333"/>`, 11, 13)}
        <span class="power"><svg width="13" height="10" viewBox="0 0 13 10"><rect x=".5" y="2" width="11" height="7" rx="1.500" fill="#4fae57" stroke="#e0e0e0"/><path d="M12.500 4v3" stroke="#e0e0e0"/><path d="M5.500 0v4.500M4 4.500h3.500L6 7.500z" stroke="#fff" fill="#fff" stroke-width=".8"/></svg>100%</span>
        <div class="clock">1:56 PM<br>3/20/2026</div>
      </div>`;
  }
}

/* ---------- page ---------- */

@customElement("app-root")
class AppRoot extends LitElement {
  static styles = css`
    :host { display: flex; flex-direction: column; min-height: 100vh; }
  `;
  render() {
    return html`<browser-bar></browser-bar><sheets-header></sheets-header><sheet-grid></sheet-grid><sheet-tabs></sheet-tabs><task-bar></task-bar>`;
  }
}
